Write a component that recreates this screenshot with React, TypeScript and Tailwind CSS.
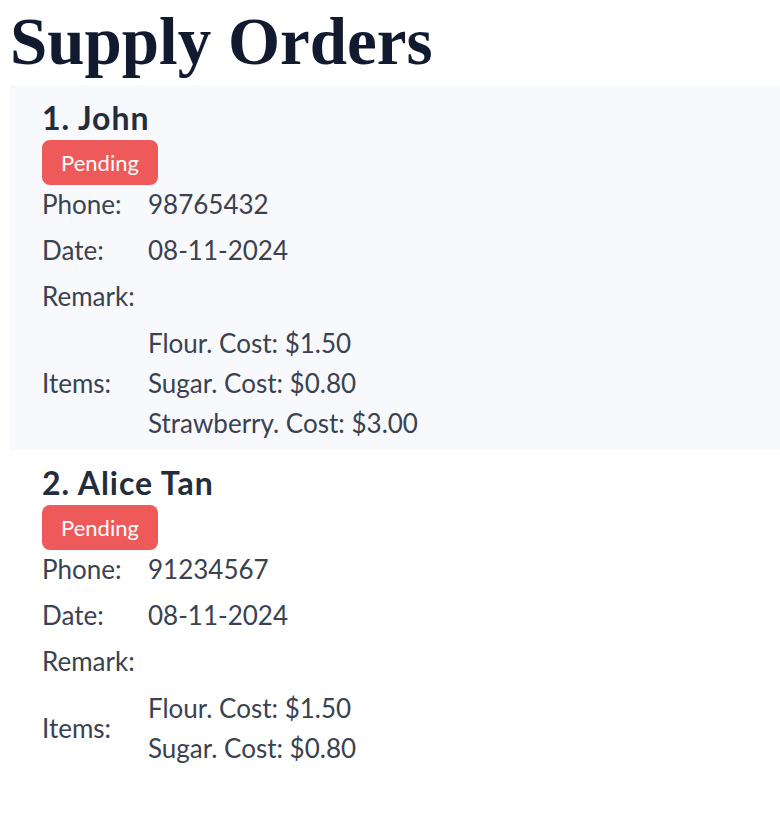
const orders = [
  {
    id: 1,
    name: "John",
    status: "Pending",
    phone: "98765432",
    date: "08-11-2024",
    remark: "",
    items: [
      { name: "Flour", cost: 1.5 },
      { name: "Sugar", cost: 0.8 },
      { name: "Strawberry", cost: 3 },
    ],
  },
  {
    id: 2,
    name: "Alice Tan",
    status: "Pending",
    phone: "91234567",
    date: "08-11-2024",
    remark: "",
    items: [
      { name: "Flour", cost: 1.5 },
      { name: "Sugar", cost: 0.8 },
    ],
  },
];

function Row({ label, children }: { label: string; children?: React.ReactNode }) {
  return (
    <div className="flex h-[46px] items-center">
      <span className="w-[106px] shrink-0">{label}</span>
      <span>{children}</span>
    </div>
  );
}

export default function App() {
  return (
    <div className="min-h-screen bg-white pl-[10px] font-['Lato',sans-serif] overflow-hidden">
      <h1 className="h-[85px] font-['Liberation_Serif',serif] text-[67px] font-bold leading-[82px] text-[#111a2e]">
        Supply Orders
      </h1>

      {orders.map((order, i) => (
        <div
          key={order.id}
          className={`px-8 pt-[15px] pb-[3px] text-[26px] text-[#3a4250] ${i % 2 === 0 ? "bg-[#f8f9fd]" : ""}`}
        >
          <h2 className="h-[36px] text-[32px] font-bold leading-[36px] tracking-[0.03em] text-[#252d3c]">
            {order.id}. {order.name}
          </h2>
          <div className="mt-[4px] mb-[-4px] flex h-[45px] w-[116px] items-center justify-center rounded-lg bg-[#ee5959] text-[22px] text-white">
            {order.status}
          </div>

          <Row label="Phone:">{order.phone}</Row>
          <Row label="Date:">{order.date}</Row>
          <Row label="Remark:">{order.remark}</Row>
          <div className="flex items-center py-1">
            <span className="w-[106px] shrink-0">Items:</span>
            <div>
              {order.items.map((item) => (
                <div key={item.name} className="h-10 leading-10">
                  {item.name}. Cost: ${item.cost.toFixed(2)}
                </div>
              ))}
            </div>
          </div>
        </div>
      ))}
    </div>
  );
}
